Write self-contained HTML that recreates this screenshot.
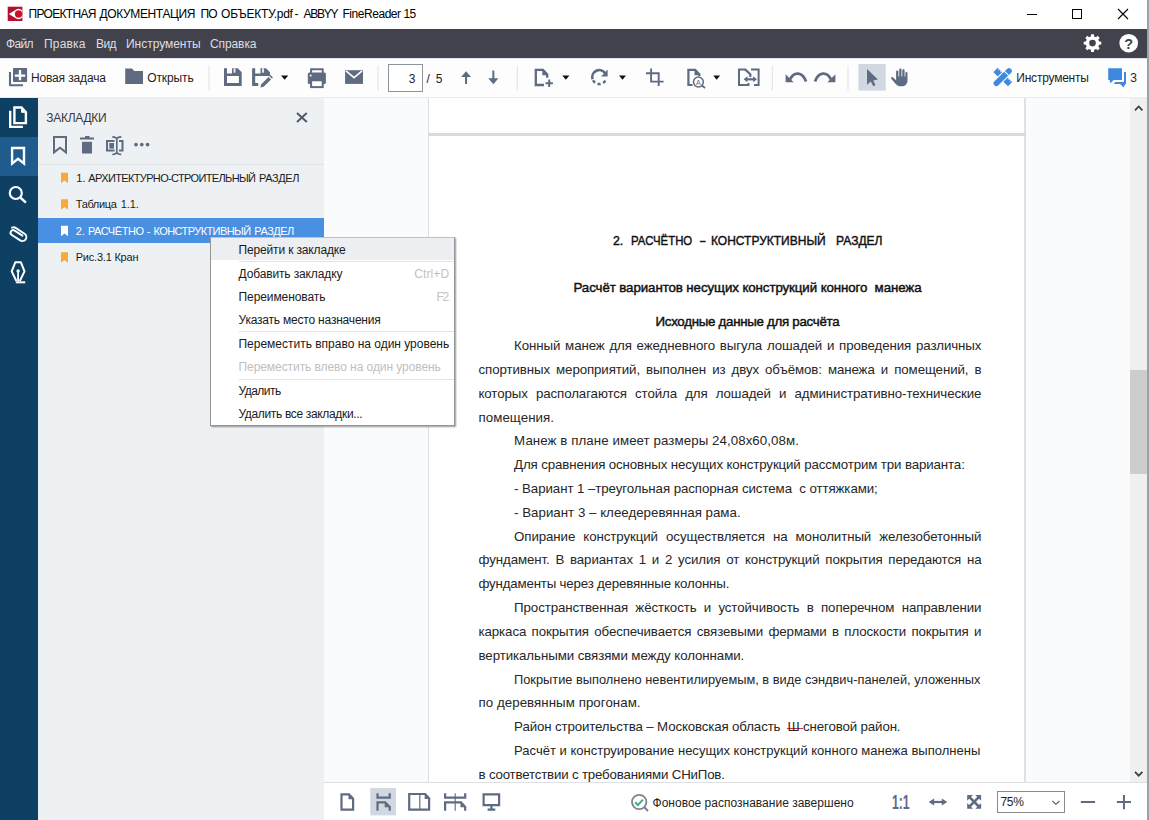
<!DOCTYPE html>
<html lang="ru">
<head>
<meta charset="utf-8">
<title>ABBYY FineReader 15</title>
<style>
*{box-sizing:border-box;margin:0;padding:0}
html,body{width:1149px;height:820px;overflow:hidden;background:#fff}
body{font-family:"Liberation Sans","DejaVu Sans",sans-serif;color:#1a1a1a;position:relative}
.abs{position:absolute}
svg{position:absolute;overflow:visible}
.t{position:absolute;white-space:pre}
.rs{background:linear-gradient(#d8332f,#d8332f) 0 9px/100% 1px no-repeat}
#titlebar{left:0;top:0;width:1149px;height:29px;background:#fff}
#menubar{left:0;top:29px;width:1149px;height:29px;background:#41424c}
#toolbar{left:0;top:58px;width:1149px;height:40px;background:#fdfdfe;border-top:1px solid #dfe3ee;border-bottom:1px solid #e9ecef}
#sidenav{left:0;top:98px;width:38px;height:722px;background:#0e4064}
#sidenav .sel{left:0;top:39px;width:38px;height:39px;background:#1f5b8d}
#bpanel{left:38px;top:98px;width:286px;height:722px;background:#eef1f3}
#bpanel .hl{left:0;top:66px;width:286px;height:1px;background:#e2e5e8}
#bpanel .selrow{left:0;top:120px;width:286px;height:25px;background:#4a90e2}
#docarea{left:324px;top:98px;width:806px;height:684px;background:#f9fbfc;overflow:hidden;border-left:1px solid #fbfcfd}
#pages{left:103px;top:0;width:598px;height:684px;background:#fff;border-left:1px solid #d9dee3;border-right:2px solid #dde2e7}
#pagegap{left:103px;top:35px;width:598px;height:3px;background:#d5dbe1}
#vscroll{left:1130px;top:98px;width:17px;height:684px;background:#f0f0f0}
#vthumb{left:0;top:272px;width:17px;height:104px;background:#cdcdcd}
#bottombar{left:324px;top:782px;width:825px;height:38px;background:#fff;border-top:1px solid #dde1e5}
#ctx{left:210px;top:237px;width:245px;height:189px;background:#fff;border:1px solid #969696;border-top-color:#b9c3d0;box-shadow:1px 1px 1.500px rgba(0,0,0,.40)}
#ctx .hl{left:0;top:0;width:243px;height:22px;background:#edeef1}
#ctx .ln{left:28px;width:215px;height:1px;background:#e1e3e6}
#redge{left:1146.500px;top:0;width:2.500px;height:820px;background:#9aa1ad}
</style>
</head>
<body>
<!-- TITLE BAR -->
<div id="titlebar" class="abs">
<svg style="left:0;top:0" width="1149" height="29" viewBox="0 0 1149 29">
<rect x="7.800" y="6.800" width="14.500" height="14.200" fill="#a50e27"/>
<path d="M7.800 6.800H22.300V21H7.800z" fill="#c1122e" opacity="0.550"/>
<path d="M8.800 13.950L15.800 9.700A5.100 5.100 0 0 1 22.300 10.500V17.400A5.100 5.100 0 0 1 15.800 18.200z" fill="#fff"/>
<circle cx="18.600" cy="13.950" r="3.700" fill="#c4122f"/>
<path d="M1027 14.500H1037" stroke="#000" stroke-width="1"/>
<rect x="1072.500" y="9.500" width="9" height="9" fill="none" stroke="#000" stroke-width="1"/>
<path d="M1118 9L1128 19M1128 9L1118 19" stroke="#000" stroke-width="1.100"/>
</svg>
</div>
<!-- MENU BAR -->
<div id="menubar" class="abs">
<svg style="left:0;top:0" width="1149" height="29" viewBox="0 29 1149 29">
<path d="M1099.10 41.46L1101.28 41.64L1101.28 44.56L1099.10 44.74L1098.33 46.61L1099.74 48.27L1097.67 50.34L1096.01 48.93L1094.14 49.70L1093.96 51.88L1091.04 51.88L1090.86 49.70L1088.99 48.93L1087.33 50.34L1085.26 48.27L1086.67 46.61L1085.90 44.74L1083.72 44.56L1083.72 41.64L1085.90 41.46L1086.67 39.59L1085.26 37.93L1087.33 35.86L1088.99 37.27L1090.86 36.50L1091.04 34.32L1093.96 34.32L1094.14 36.50L1096.01 37.27L1097.67 35.86L1099.74 37.93L1098.33 39.59Z" fill="#fff"/>
<circle cx="1092.500" cy="43.100" r="3.300" fill="#41424c"/>
<circle cx="1128.700" cy="43.200" r="9.300" fill="#fff"/>
<text x="1128.700" y="48.600" font-family="Liberation Sans, sans-serif" font-size="14.500" font-weight="bold" text-anchor="middle" fill="#41424c">?</text>
</svg>
</div>
<!-- TOOLBAR -->
<div id="toolbar" class="abs"></div>
<svg style="left:0;top:58px" width="1149" height="40" viewBox="0 58 1149 40" fill="#5e6b81" stroke="none">
<!-- separators -->
<g fill="#dfe2e7"><rect x="208.500" y="65.500" width="1" height="25"/><rect x="377.500" y="65.500" width="1" height="25"/><rect x="516.800" y="65.500" width="1" height="25"/><rect x="771.800" y="65.500" width="1" height="25"/><rect x="847.500" y="65.500" width="1" height="25"/></g>
<!-- new task -->
<path d="M10 72V85.200H23" fill="none" stroke="#5e6b81" stroke-width="2.100" stroke-linejoin="round"/>
<rect x="13" y="68" width="14.100" height="14" rx="0.800"/>
<path d="M20 69.900v10.400M14.800 75.600h10.400" stroke="#fff" stroke-width="2.300" fill="none"/>
<!-- folder -->
<path d="M125.200 68.600h6.800l2.200 2.400h8.800v13h-17.800z"/>
<!-- save -->
<path fill-rule="evenodd" d="M224 68.300H227V73.500H232V68.300H237.700L241.700 72.300V86H224z M227 76H238.900V83H227z"/>
<rect x="233.500" y="68.300" width="2" height="4.400" fill="#e3e6eb"/>
<!-- save as -->
<path d="M252.100 68.300H255.200V73.500H260.500V68.300H266L270 72.300V76H255.200V83H258.200V86H252.100z"/>
<rect x="262" y="68.300" width="2" height="4.400" fill="#e3e6eb"/>
<path d="M260.400 87.600l0.900-3.300 7.300-7.300 2.400 2.400-7.300 7.300z"/>
<path d="M269.400 76.200l1.100-1.100 2.400 2.400-1.100 1.100z"/>
<path d="M281 75.6H288.3L284.65 79.8z" fill="#111"/>
<!-- printer -->
<path fill-rule="evenodd" d="M310.100 68.300h13.600v5h-13.600z M312.100 70.300h9.600v3h-9.600z"/>
<rect x="307.800" y="72.400" width="18.100" height="11.500" rx="1.500"/>
<rect x="309.800" y="74.700" width="1.700" height="1.700" fill="#fff"/>
<rect x="310.100" y="79.800" width="13.600" height="8.300"/>
<rect x="312.100" y="81.300" width="9.600" height="4.800" fill="#fff"/>
<!-- mail -->
<rect x="345.100" y="70.200" width="17.900" height="13.700"/>
<path d="M346 70.800L354.050 77.600L362.100 70.800" fill="none" stroke="#fff" stroke-width="1.600"/>
<!-- page box -->
<rect x="388.500" y="64.500" width="34" height="27" fill="#fff" stroke="#8f959e" stroke-width="1"/>
<!-- up / down -->
<path d="M466.050 71.300l4.900 5.700h-3.900v7.100h-2v-7.100h-3.900z"/>
<path d="M493.350 84.200l-5.100-5.900h4.100v-7.900h2v7.900h4.100z"/>
<!-- add page -->
<path d="M544 85H535.800V69.900H543L547.200 74.400V77.800" fill="none" stroke="#5e6b81" stroke-width="2.300"/>
<path d="M542.300 69.900V75.200H547.200z"/>
<path d="M549.200 79.600v7.400M545.500 83.300h7.400" fill="none" stroke="#5e6b81" stroke-width="2"/>
<path d="M562.3 75.6H569.4L565.8499999999999 79.8z" fill="#111"/>
<!-- rotate -->
<path d="M592.64 79.26A7.0 7.0 0 0 1 605.24 73.39" fill="none" stroke="#5e6b81" stroke-width="2.600"/>
<path d="M607.600 69.600V76.600H601.200z"/>
<path d="M593.06 80.28A7.0 7.0 0 0 0 595.09 82.69M597.49 83.86A7.0 7.0 0 0 0 600.64 83.97M603.11 82.97A7.0 7.0 0 0 0 605.30 80.71" fill="none" stroke="#5e6b81" stroke-width="2.500"/>
<path d="M619 75.6H626L622.5 79.8z" fill="#111"/>
<!-- crop -->
<path d="M651.100 68.400V81.600H663.600M646 73.200H658.700V86" fill="none" stroke="#5e6b81" stroke-width="1.900"/>
<!-- recognize -->
<path d="M692.500 85H688.400V69.900H695.200L699.400 74.400V76" fill="none" stroke="#5e6b81" stroke-width="2.200"/>
<path d="M694.500 69.900V75.200H699.400z"/>
<circle cx="698.400" cy="82" r="4.900" fill="#fdfdfe" stroke="#5e6b81" stroke-width="1.500"/>
<path d="M701.900 85.600L705 88" fill="none" stroke="#5e6b81" stroke-width="1.900"/>
<text x="698.400" y="84.500" font-family="Liberation Sans, sans-serif" font-size="7" text-anchor="middle" fill="#5e6b81">A</text>
<path d="M713.2 75.6H720.1L716.6500000000001 79.8z" fill="#111"/>
<!-- compare -->
<path d="M745.500 69.400H739V85H748.500V83M751 69.400H758.600V85H754" fill="none" stroke="#5e6b81" stroke-width="2"/>
<path d="M745 69.400L750.300 74.300V77" fill="none" stroke="#5e6b81" stroke-width="2.200"/>
<path d="M746 79.300H755" fill="none" stroke="#5e6b81" stroke-width="2.200"/>
<path d="M743.600 79.300l3.800-3v6z M757 79.300l-3.800-3v6z"/>
<!-- undo / redo -->
<path d="M790 79.500C793.500 71.500 802.500 71 806 81.500" fill="none" stroke="#5e6b81" stroke-width="2.800"/>
<path d="M785.600 74.200v8h8z"/>
<path d="M831 79.500C827.500 71.500 818.500 71 815 81.500" fill="none" stroke="#5e6b81" stroke-width="2.800"/>
<path d="M835.400 74.200v8h-8z"/>
<!-- pointer (selected) -->
<rect x="858.400" y="64" width="27.300" height="26.600" fill="#d1d8e2"/>
<path d="M867 69V84.800L870.800 81.400L873.300 86.200L875.500 85.100L873.200 80.400L877.900 79.400z"/>
<!-- hand -->
<path d="M896.100 80.200V71.600a1.150 1.150 0 0 1 2.300 0V76.500h0.800V69.600a1.150 1.150 0 0 1 2.300 0V76.500h0.800V70.400a1.150 1.150 0 0 1 2.300 0V76.500h0.800V73.100a1.050 1.050 0 0 1 2.100 0V80C907.500 84.200 905 86.300 901.500 86.300C898 86.300 896.500 85.200 894.600 82.700L891.300 78.700C890.500 77.700 891.800 76.400 892.800 77.200z"/>
<!-- tools (blue) -->
<path d="M995.500 70L1010.100 84.100" stroke="#3f88df" stroke-width="6" fill="none"/>
<path d="M998.300 69.300l0.900 0.900M1000.200 71.200l0.900 0.900M1008 78.800l0.900 0.900M1009.900 80.700l0.900 0.900" stroke="#b9d6f6" stroke-width="1.200" fill="none"/>
<path d="M994.500 85L1010.500 69.500" stroke="#fdfdfe" stroke-width="8" fill="none"/>
<path d="M996.400 83.200L1009 71" stroke="#3f88df" stroke-width="5.600" stroke-linecap="round" fill="none"/>
<path d="M1004.300 71.200L1008.800 75.700" stroke="#fdfdfe" stroke-width="1.100" fill="none"/>
<!-- comments -->
<g fill="#3f88df">
<path d="M1108.200 68.200h13.800v11.800h-8.400l-3.200 3.200l-0.800-3.200h-1.400z"/>
<path d="M1124 72h2v12h-0.600l-1.900 3.400l-3.400-3.400h-6.400l1.800-1.900h8.500z"/>
</g>
</svg>
<!-- SIDE NAV -->
<div id="sidenav" class="abs"><div class="sel abs"></div></div>
<svg style="left:0;top:98px" width="38" height="722" viewBox="0 98 38 722" fill="none" stroke="#fff" stroke-width="2">
<!-- pages -->
<path d="M14.400 107.500H21.500L25.900 112.300V123.100H14.400z" stroke-width="2.400"/>
<path d="M21.500 107.500V112.300H25.900z" fill="#fff" stroke-width="1"/>
<path d="M10.200 110.700V126.900H22.900" stroke-width="2.400"/>
<!-- bookmark -->
<path d="M12.100 148H24V163.600L18.050 158.900L12.100 163.600z" stroke-width="2.400"/>
<!-- search -->
<circle cx="15.800" cy="193" r="6" stroke-width="2.200"/>
<path d="M20.300 197.500L25.900 202.600" stroke-width="2.400"/>
<!-- clip -->
<g transform="translate(18 234.200) rotate(33)"><path d="M4.500 -1.200H-4.800A2.600 2.600 0 0 0 -4.800 4H5.200A4 4 0 0 0 5.200 -4H-5.400A4 4 0 0 0 -8.600 -2.200" stroke-width="1.900" stroke-linecap="round"/></g>
<!-- pen nib -->
<path d="M16.400 281L11.700 271.400L15.300 262.300H20.900L24.500 271.400L19.800 281" stroke-width="2" stroke-linejoin="round"/>
<path d="M18.100 272V281.500" stroke-width="1.800"/>
<circle cx="18.100" cy="271" r="1.700" fill="#fff" stroke="none"/>
<path d="M15.800 282.300H25.200" stroke-width="2"/>
</svg>
<!-- BOOKMARK PANEL -->
<div id="bpanel" class="abs"><div class="hl abs"></div><div class="selrow abs"></div></div>
<svg style="left:38px;top:98px" width="286" height="722" viewBox="38 98 286 722" fill="#5e6b81">
<!-- close -->
<path d="M297 113L306.800 122M306.800 113L297 122" stroke="#4f596b" stroke-width="2" fill="none"/>
<!-- add bookmark -->
<path d="M54 137H66V152.400L60 147.700L54 152.400z" fill="none" stroke="#5e6b81" stroke-width="2"/>
<!-- trash -->
<path d="M85 136h4.500v1.500h4.500v2h-14v-2h5z"/>
<path d="M82 141.800h10v11.700h-10z"/>
<!-- rename -->
<path d="M114.500 141H107V150.500H114.500M119 141H122.500V150.500H119" fill="none" stroke="#5e6b81" stroke-width="2"/>
<rect x="109.300" y="143" width="4.700" height="5.600"/>
<path d="M112.300 136.800C115 136.800 116.800 137.400 116.800 139.500V151.800C116.800 153.800 115 154.400 112.300 154.400M121.300 136.800C118.600 136.800 116.800 137.400 116.800 139.500M121.300 154.400C118.600 154.400 116.800 153.800 116.800 151.800" fill="none" stroke="#5e6b81" stroke-width="1.700"/>
<!-- dots -->
<circle cx="136" cy="144.600" r="1.850"/><circle cx="141.800" cy="144.600" r="1.850"/><circle cx="147.600" cy="144.600" r="1.850"/>
<!-- row icons -->
<path d="M61 172.7h7v10.500l-3.500-2.600l-3.500 2.600z" fill="#f9a938"/>
<path d="M61 199.2h7v10.500l-3.500-2.600l-3.500 2.600z" fill="#f9a938"/>
<path d="M61 225.7h7v10.500l-3.500-2.600l-3.500 2.600z" fill="#ffffff"/>
<path d="M61 252.2h7v10.500l-3.500-2.600l-3.500 2.600z" fill="#f9a938"/>
</svg>
<!-- DOC AREA -->
<div id="docarea" class="abs"><div id="pages" class="abs"></div><div id="pagegap" class="abs"></div></div>
<div class="t" style="left:612.5px;top:234px;font-size:13.3px;line-height:13.3px;color:#111;transform:scaleX(0.928);transform-origin:0 0;-webkit-text-stroke:0.45px #111;">2.</div>
<div class="t" style="left:631.0px;top:234px;font-size:13.3px;line-height:13.3px;color:#111;transform:scaleX(0.856);transform-origin:0 0;-webkit-text-stroke:0.45px #111;">РАСЧЁТНО</div>
<div class="t" style="left:700.0px;top:234px;font-size:13.3px;line-height:13.3px;color:#111;transform:scaleX(0.729);transform-origin:0 0;-webkit-text-stroke:0.45px #111;">–</div>
<div class="t" style="left:710.7px;top:234px;font-size:13.3px;line-height:13.3px;color:#111;transform:scaleX(0.902);transform-origin:0 0;-webkit-text-stroke:0.45px #111;">КОНСТРУКТИВНЫЙ</div>
<div class="t" style="left:835.8px;top:234px;font-size:13.3px;line-height:13.3px;color:#111;transform:scaleX(0.906);transform-origin:0 0;-webkit-text-stroke:0.45px #111;">РАЗДЕЛ</div>
<div class="t" style="left:573.5px;top:281px;font-size:13.3px;line-height:13.3px;color:#111;letter-spacing:-0.09px;-webkit-text-stroke:0.45px #111;">Расчёт вариантов несущих конструкций конного  манежа</div>
<div class="t" style="left:655.5px;top:315px;font-size:13.3px;line-height:13.3px;color:#111;letter-spacing:-0.28px;-webkit-text-stroke:0.45px #111;">Исходные данные для расчёта</div>
<div class="t" style="left:514.1px;top:339px;font-size:13.3px;line-height:13.3px;color:#262626;letter-spacing:-0.1px;word-spacing:1.19px;">Конный манеж для ежедневного выгула лошадей и проведения различных</div>
<div class="t" style="left:478.5px;top:363px;font-size:13.3px;line-height:13.3px;color:#262626;letter-spacing:-0.1px;word-spacing:2.48px;">спортивных мероприятий, выполнен из двух объёмов: манежа и помещений, в</div>
<div class="t" style="left:478.5px;top:387px;font-size:13.3px;line-height:13.3px;color:#262626;letter-spacing:-0.1px;word-spacing:4.53px;">которых располагаются стойла для лошадей и административно-технические</div>
<div class="t" style="left:478.5px;top:411px;font-size:13.3px;line-height:13.3px;color:#262626;letter-spacing:0.06px;">помещения.</div>
<div class="t" style="left:514.1px;top:434px;font-size:13.3px;line-height:13.3px;color:#262626;letter-spacing:0.07px;">Манеж в плане имеет размеры 24,08х60,08м.</div>
<div class="t" style="left:514.1px;top:458px;font-size:13.3px;line-height:13.3px;color:#262626;letter-spacing:-0.13px;">Для сравнения основных несущих конструкций рассмотрим три варианта:</div>
<div class="t" style="left:514.1px;top:482px;font-size:13.3px;line-height:13.3px;color:#262626;letter-spacing:-0.08px;">- Вариант 1 –треугольная распорная система  с оттяжками;</div>
<div class="t" style="left:514.1px;top:506px;font-size:13.3px;line-height:13.3px;color:#262626;letter-spacing:0.01px;">- Вариант 3 – клеедеревянная рама.</div>
<div class="t" style="left:514.1px;top:530px;font-size:13.3px;line-height:13.3px;color:#262626;letter-spacing:-0.1px;word-spacing:4.56px;">Опирание конструкций осуществляется на монолитный железобетонный</div>
<div class="t" style="left:478.5px;top:553px;font-size:13.3px;line-height:13.3px;color:#262626;letter-spacing:-0.1px;word-spacing:2.20px;">фундамент. В вариантах 1 и 2 усилия от конструкций покрытия передаются на</div>
<div class="t" style="left:478.5px;top:577px;font-size:13.3px;line-height:13.3px;color:#262626;letter-spacing:-0.19px;">фундаменты через деревянные колонны.</div>
<div class="t" style="left:514.1px;top:601px;font-size:13.3px;line-height:13.3px;color:#262626;letter-spacing:-0.1px;word-spacing:3.70px;">Пространственная жёсткость и устойчивость в поперечном направлении</div>
<div class="t" style="left:478.5px;top:625px;font-size:13.3px;line-height:13.3px;color:#262626;letter-spacing:-0.1px;word-spacing:1.77px;">каркаса покрытия обеспечивается связевыми фермами в плоскости покрытия и</div>
<div class="t" style="left:478.5px;top:649px;font-size:13.3px;line-height:13.3px;color:#262626;letter-spacing:-0.08px;">вертикальными связями между колоннами.</div>
<div class="t" style="left:514.1px;top:673px;font-size:13.3px;line-height:13.3px;color:#262626;transform:scaleX(0.964);transform-origin:0 0;">Покрытие выполнено невентилируемым, в виде сэндвич-панелей, уложенных</div>
<div class="t" style="left:478.5px;top:696px;font-size:13.3px;line-height:13.3px;color:#262626;letter-spacing:0.05px;">по деревянным прогонам.</div>
<div class="t" style="left:514.1px;top:720px;font-size:13.3px;line-height:13.3px;color:#262626;letter-spacing:-0.14px;">Район строительства – Московская область  <span class="rs">Ш </span>снеговой район.</div>
<div class="t" style="left:514.1px;top:744px;font-size:13.3px;line-height:13.3px;color:#262626;transform:scaleX(0.980);transform-origin:0 0;">Расчёт и конструирование несущих конструкций конного манежа выполнены</div>
<div class="t" style="left:478.5px;top:768px;font-size:13.3px;line-height:13.3px;color:#262626;letter-spacing:-0.19px;">в соответствии с требованиями СНиПов.</div>
<div id="vscroll" class="abs"><div id="vthumb" class="abs"></div></div>
<svg style="left:1130px;top:98px" width="17" height="684" viewBox="1130 98 17 684" fill="none" stroke="#3c3c3c" stroke-width="1.700">
<path d="M1135 110.300L1138.700 106.400L1142.400 110.300"/>
<path d="M1135 771.800L1138.700 775.700L1142.400 771.800"/>
</svg>
<!-- BOTTOM BAR -->
<div id="bottombar" class="abs"></div>
<svg style="left:324px;top:782px" width="825" height="38" viewBox="324 782 825 38" fill="none" stroke="#5e6b81" stroke-width="2">
<!-- single page -->
<path d="M341.500 794.300H349L353.100 798.800V809.600H341.500z" stroke-width="2.200"/>
<path d="M348.500 794.300V799.300H353.100z" fill="#5e6b81" stroke="none"/>
<!-- continuous (selected) -->
<rect x="370.300" y="788.100" width="25.700" height="27.300" fill="#d1d8e2" stroke="none"/>
<path d="M377.500 793.200V797.700H389.700V793.200" stroke-width="2.200"/>
<path d="M377.500 810.700V802.300H385.200L389.700 807V810.700" stroke-width="2.200"/>
<path d="M384.700 802.300V807.300H389.700z" fill="#5e6b81" stroke="none"/>
<!-- two page -->
<path d="M409.200 794H425.200L429.100 798.300V809.600H409.200z" stroke-width="2.200"/>
<path d="M419.800 794V809.600" stroke-width="1.200"/>
<path d="M424.700 794V799H429.100z" fill="#5e6b81" stroke="none"/>
<!-- two page continuous -->
<path d="M445.100 793.200V797.700H465.200V793.200" stroke-width="2.200"/>
<path d="M445.100 810.700V802.300H461L465.200 807V810.700" stroke-width="2.200"/>
<path d="M455.200 793.200V810.700" stroke-width="1.100"/>
<path d="M460.500 802.300V807.300H465.200z" fill="#5e6b81" stroke="none"/>
<!-- monitor -->
<path d="M483.600 794.300H499.100V805.200H483.600z M491.400 805.200V809.500 M487.600 809.600H495.300" stroke-width="2.200"/>
<!-- status check -->
<circle cx="639.200" cy="802" r="7.200" stroke="#7a8591" stroke-width="1.800"/>
<path d="M644.400 807.300L648 811" stroke="#7a8591" stroke-width="2"/>
<path d="M635.200 802.300L637.900 805.100L642.900 799.600" stroke="#3fa882" stroke-width="2"/>
<!-- fit width arrow -->
<path d="M932 802H944" stroke-width="2.200"/>
<path d="M928.700 802l5.400-3.600v7.200z M947.200 802l-5.400-3.600v7.200z" fill="#5e6b81" stroke="none"/>
<!-- fit page -->
<path d="M969 796.700L979.300 807M979.300 796.700L969 807" stroke-width="2.500"/>
<path d="M967.200 794.900h5.800l-5.800 5.800z M981.100 794.900v5.800l-5.800-5.800z M967.200 808.800v-5.800l5.800 5.800z M981.100 808.800h-5.800l5.800-5.800z" fill="#5e6b81" stroke="none"/>
<!-- zoom box -->
<rect x="997.500" y="791.500" width="67" height="21" fill="#fff" stroke="#8a8a8a" stroke-width="1"/>
<path d="M1052.400 801L1055.900 804.300L1059.400 801" stroke="#555" stroke-width="1.100"/>
<!-- minus plus -->
<path d="M1080.800 802H1095.100 M1116.900 802H1131 M1123.950 795V809.200" stroke-width="2"/>
</svg>
<div class="t" style="left:891.600px;top:791.700px;font-size:19.400px;line-height:20px;font-weight:bold;color:#5e6b81;transform:scaleX(0.630);transform-origin:0 0;letter-spacing:0px">1:1</div>
<div class="t" style="left:28.5px;top:8px;font-size:12px;line-height:12px;color:#000;letter-spacing:-0.67px;">ПРОЕКТНАЯ</div>
<div class="t" style="left:99.5px;top:8px;font-size:12px;line-height:12px;color:#000;letter-spacing:-0.36px;">ДОКУМЕНТАЦИЯ</div>
<div class="t" style="left:200.5px;top:8px;font-size:12px;line-height:12px;color:#000;letter-spacing:-0.97px;">ПО</div>
<div class="t" style="left:221.1px;top:8px;font-size:12px;line-height:12px;color:#000;letter-spacing:-0.29px;">ОБЪЕКТУ.pdf</div>
<div class="t" style="left:294.5px;top:8px;font-size:12px;line-height:12px;color:#000;letter-spacing:1.00px;">-</div>
<div class="t" style="left:303.5px;top:8px;font-size:12px;line-height:12px;color:#000;letter-spacing:-1.26px;">ABBYY</div>
<div class="t" style="left:342.5px;top:8px;font-size:12px;line-height:12px;color:#000;letter-spacing:-0.46px;">FineReader</div>
<div class="t" style="left:403.5px;top:8px;font-size:12px;line-height:12px;color:#000;letter-spacing:-0.76px;">15</div>
<div class="t" style="left:6.0px;top:38px;font-size:12px;line-height:12px;color:#dedee2;letter-spacing:-0.67px;">Файл</div>
<div class="t" style="left:44.0px;top:38px;font-size:12px;line-height:12px;color:#dedee2;letter-spacing:0.19px;">Правка</div>
<div class="t" style="left:96.0px;top:38px;font-size:12px;line-height:12px;color:#dedee2;letter-spacing:-0.61px;">Вид</div>
<div class="t" style="left:126.0px;top:38px;font-size:12px;line-height:12px;color:#dedee2;letter-spacing:-0.03px;">Инструменты</div>
<div class="t" style="left:209.9px;top:38px;font-size:12px;line-height:12px;color:#dedee2;letter-spacing:-0.08px;">Справка</div>
<div class="t" style="left:30.9px;top:72px;font-size:12px;line-height:12px;color:#1e1e1e;letter-spacing:-0.14px;">Новая задача</div>
<div class="t" style="left:147.2px;top:72px;font-size:12px;line-height:12px;color:#1e1e1e;letter-spacing:-0.11px;">Открыть</div>
<div class="t" style="left:408.8px;top:73px;font-size:12px;line-height:12px;color:#1e1e1e;letter-spacing:0.01px;">3</div>
<div class="t" style="left:426.5px;top:73px;font-size:12px;line-height:12px;color:#1e1e1e;letter-spacing:1.28px;">/ 5</div>
<div class="t" style="left:1016.3px;top:72px;font-size:12px;line-height:12px;color:#1e1e1e;letter-spacing:-0.22px;">Инструменты</div>
<div class="t" style="left:1130.2px;top:72px;font-size:12px;line-height:12px;color:#1e1e1e;letter-spacing:-0.39px;">3</div>
<div class="t" style="left:46.2px;top:112px;font-size:12px;line-height:12px;color:#3a3a3a;letter-spacing:-0.25px;">ЗАКЛАДКИ</div>
<div class="t" style="left:76.2px;top:173px;font-size:11px;line-height:11px;color:#1a1a1a;letter-spacing:0.11px;">1.</div>
<div class="t" style="left:88.3px;top:173px;font-size:11px;line-height:11px;color:#1a1a1a;letter-spacing:-0.64px;">АРХИТЕКТУРНО-СТРОИТЕЛЬНЫЙ</div>
<div class="t" style="left:259.1px;top:173px;font-size:11px;line-height:11px;color:#1a1a1a;letter-spacing:-0.41px;">РАЗДЕЛ</div>
<div class="t" style="left:75.8px;top:199px;font-size:11px;line-height:11px;color:#1a1a1a;letter-spacing:-0.36px;">Таблица</div>
<div class="t" style="left:120.7px;top:199px;font-size:11px;line-height:11px;color:#1a1a1a;letter-spacing:-0.09px;">1.1.</div>
<div class="t" style="left:75.8px;top:226px;font-size:11px;line-height:11px;color:#ffffff;letter-spacing:0.11px;">2.</div>
<div class="t" style="left:87.9px;top:226px;font-size:11px;line-height:11px;color:#ffffff;letter-spacing:-0.44px;">РАСЧЁТНО</div>
<div class="t" style="left:146.8px;top:226px;font-size:11px;line-height:11px;color:#ffffff;letter-spacing:0.83px;">-</div>
<div class="t" style="left:153.6px;top:226px;font-size:11px;line-height:11px;color:#ffffff;letter-spacing:-0.59px;">КОНСТРУКТИВНЫЙ</div>
<div class="t" style="left:254.3px;top:226px;font-size:11px;line-height:11px;color:#ffffff;letter-spacing:-0.49px;">РАЗДЕЛ</div>
<div class="t" style="left:75.7px;top:252px;font-size:11px;line-height:11px;color:#1a1a1a;letter-spacing:-0.21px;">Рис.3.1 Кран</div>
<div class="t" style="left:652.5px;top:797px;font-size:12px;line-height:12px;color:#1e1e1e;letter-spacing:0.01px;">Фоновое распознавание завершено</div>
<div class="t" style="left:1000.4px;top:796px;font-size:12px;line-height:12px;color:#1e1e1e;letter-spacing:-0.27px;">75%</div><!-- CONTEXT MENU -->
<div id="ctx" class="abs"><div class="hl abs"></div><div class="ln abs" style="top:23px"></div><div class="ln abs" style="top:93px"></div><div class="ln abs" style="top:141px"></div></div>
<div class="t" style="left:238.5px;top:244px;font-size:12px;line-height:12px;color:#1a1a1a;letter-spacing:-0.15px;">Перейти к закладке</div>
<div class="t" style="left:238.5px;top:268px;font-size:12px;line-height:12px;color:#1a1a1a;letter-spacing:-0.13px;">Добавить закладку</div>
<div class="t" style="left:414.2px;top:268px;font-size:12px;line-height:12px;color:#c2c2c2;letter-spacing:0.13px;">Ctrl+D</div>
<div class="t" style="left:238.5px;top:291px;font-size:12px;line-height:12px;color:#1a1a1a;letter-spacing:-0.08px;">Переименовать</div>
<div class="t" style="left:436.5px;top:291px;font-size:12px;line-height:12px;color:#c2c2c2;letter-spacing:-1.32px;">F2</div>
<div class="t" style="left:238.5px;top:314px;font-size:12px;line-height:12px;color:#1a1a1a;letter-spacing:-0.20px;">Указать место назначения</div>
<div class="t" style="left:238.5px;top:338px;font-size:12px;line-height:12px;color:#1a1a1a;letter-spacing:-0.01px;">Переместить вправо на один уровень</div>
<div class="t" style="left:238.5px;top:361px;font-size:12px;line-height:12px;color:#c0c0c0;letter-spacing:-0.07px;">Переместить влево на один уровень</div>
<div class="t" style="left:238.5px;top:385px;font-size:12px;line-height:12px;color:#1a1a1a;letter-spacing:-0.50px;">Удалить</div>
<div class="t" style="left:238.5px;top:408px;font-size:12px;line-height:12px;color:#1a1a1a;letter-spacing:-0.34px;">Удалить все закладки...</div>
<div id="redge" class="abs"></div>
</body>
</html>
